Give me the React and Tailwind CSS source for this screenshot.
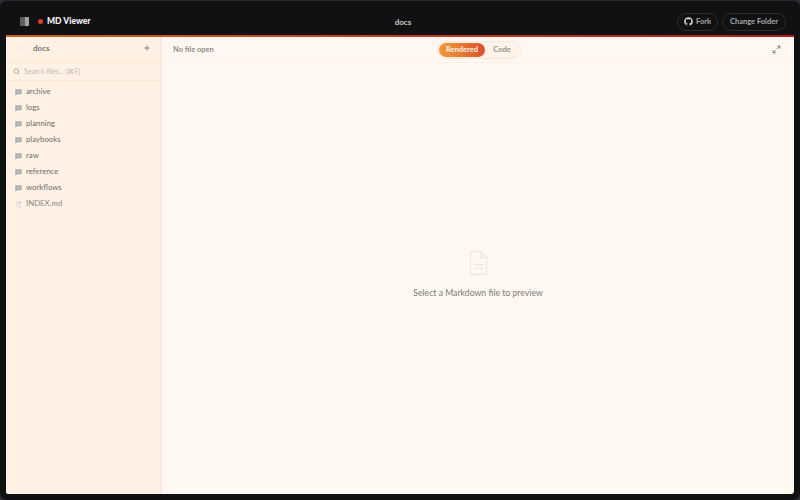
import React from "react";
import { Search, Plus, ChevronUp, Maximize2 } from "lucide-react";

const folders = ["archive", "logs", "planning", "playbooks", "raw", "reference", "workflows"];

function FolderGlyph() {
  return (
    <svg viewBox="0 0 10 10" className="h-[7px] w-[7px] shrink-0">
      <path d="M.4.4h9.2v7H3L.4 9.8z" fill="#a8adb1" />
      <path d="M2.2 2.8h5.6M2.2 5h5.6" stroke="#d2d3d0" strokeWidth="0.7" />
    </svg>
  );
}

function FileGlyph() {
  return (
    <svg viewBox="0 0 10 10" className="h-[7px] w-[7px] shrink-0">
      <path d="M1 0h5l3 3v7H1z" fill="#ebe6e4" />
      <path d="M6 0v3h3z" fill="#bdbcc2" />
    </svg>
  );
}

function GithubMark() {
  return (
    <svg viewBox="0 0 24 24" className="h-[9px] w-[9px]" fill="#d1d1d1">
      <path d="M12 .5a11.5 11.5 0 0 0-3.64 22.41c.58.1.79-.25.79-.56v-2c-3.2.7-3.88-1.54-3.88-1.54-.52-1.33-1.28-1.69-1.28-1.69-1.04-.71.08-.7.08-.7 1.16.08 1.77 1.19 1.77 1.19 1.03 1.76 2.7 1.25 3.36.96.1-.75.4-1.25.73-1.54-2.56-.29-5.25-1.28-5.25-5.69 0-1.26.45-2.28 1.19-3.09-.12-.29-.52-1.46.11-3.05 0 0 .97-.31 3.16 1.18a11 11 0 0 1 5.76 0c2.2-1.49 3.16-1.18 3.16-1.18.63 1.59.23 2.76.11 3.05.74.81 1.19 1.83 1.19 3.09 0 4.42-2.7 5.39-5.27 5.68.41.36.78 1.06.78 2.14v3.17c0 .31.21.67.8.56A11.5 11.5 0 0 0 12 .5z" />
    </svg>
  );
}

export default function App() {
  return (
    <div className="h-[500px] w-[800px] bg-[#2b2f36] font-['Lato','Noto_Sans',sans-serif] text-[#6b6663]">
      <div className="flex h-[500px] w-[800px] flex-col overflow-hidden rounded-[7px] border-t border-[#24262b] bg-[#111113]">
        <header className="flex h-[34px] shrink-0 items-center justify-between pl-[20px] pr-[14px] pt-[7px]">
          <div className="flex w-[200px] items-center">
            <div className="flex h-[9px] w-[9px] overflow-hidden rounded-[1px]">
              <span className="w-1/2 bg-[#5f5f5f]" />
              <span className="w-1/2 bg-[#a0a0a0]" />
            </div>
            <span className="ml-[9px] h-[5px] w-[5px] rounded-full bg-[#d8432c]" />
            <span className="ml-[4px] text-[8.5px] font-black text-[#f4f4f4]">MD Viewer</span>
          </div>
          <span className="text-[8px] font-bold text-[#c9c9c9]">docs</span>
          <div className="flex w-[200px] items-center justify-end gap-[4px]">
            <div className="flex h-[18px] w-[41px] items-center justify-center gap-[3px] rounded-full border border-[#2e2e30] text-[7.5px] font-bold text-[#a8a8a8]">
              <GithubMark />
              Fork
            </div>
            <div className="flex h-[18px] w-[64px] items-center justify-center rounded-full border border-[#2e2e30] text-[7.5px] font-bold text-[#a8a8a8]">
              Change Folder
            </div>
          </div>
        </header>
        <div className="mx-[6px] h-[2px] shrink-0 bg-gradient-to-r from-[#c8641f] via-[#c53a22] to-[#b01c1c]" />
        <main className="mx-[6px] mb-[6px] flex min-h-0 flex-1 overflow-hidden rounded-b-[3px] bg-[#fff8f2]">
          <aside className="flex w-[156px] shrink-0 flex-col border-r-2 border-[#fbe8db] bg-[#fff1e4]">
            <div className="flex h-[26px] items-center border-b border-[#fbe7d8] pb-[3px] pl-[11px] pr-[9px]">
              <ChevronUp className="h-[8px] w-[8px] text-[#d8d0ca]" />
              <span className="ml-[8px] flex-1 text-[8px] font-bold text-[#7d7773]">docs</span>
              <Plus className="h-[8px] w-[8px] text-[#55504d]" />
            </div>
            <div className="flex h-[18px] items-center gap-[4px] border-b border-[#fbe7d8] pl-[7px]">
              <Search className="h-[7px] w-[7px] text-[#8f8a86]" />
              <span className="text-[7px] text-[#c2bab4]">Search files... (⌘F)</span>
            </div>
            <ul className="flex flex-col pt-[3px]">
              {folders.map((f) => (
                <li key={f} className="flex h-[16px] items-center gap-[4px] pl-[9px] text-[7.8px] text-[#716c69]">
                  <FolderGlyph />
                  {f}
                </li>
              ))}
              <li className="flex h-[16px] items-center gap-[4px] pl-[9px] text-[7.8px] text-[#8a8583]">
                <FileGlyph />
                INDEX.md
              </li>
            </ul>
          </aside>
          <section className="flex min-w-0 flex-1 flex-col">
            <div className="relative flex h-[26px] shrink-0 items-center justify-between border-b border-[#fdf0e6] pl-[11px] pr-[13px]">
              <span className="text-[7.5px] font-bold text-[#8f8a86]">No file open</span>
              <div className="absolute left-[275px] top-[4px] flex h-[18px] items-center rounded-full border border-[#fbe5d8] bg-[#fff3ea] px-[1px]">
                <span className="flex h-[14px] w-[46px] items-center justify-center rounded-full bg-gradient-to-r from-[#ee9a3a] to-[#dc4f2c] text-[7.5px] font-bold text-[#fff4e6]">
                  Rendered
                </span>
                <span className="flex h-[14px] w-[34px] items-center justify-center text-[7.5px] font-bold text-[#97918d]">
                  Code
                </span>
              </div>
              <Maximize2 className="h-[9px] w-[9px] text-[#66605c]" />
            </div>
            <div className="flex flex-1 flex-col items-center justify-center pb-[7px]">
              <svg viewBox="0 0 24 24" className="h-[26px] w-[26px]" fill="none" stroke="#f0e6dd" strokeWidth="1.1" strokeLinejoin="round">
                <path d="M5 1.5h9.5L20 7v15.5H5z" />
                <path d="M14.5 1.5V7H20M8.5 9.5h2M8.5 13.5h8M8.5 17h8" />
              </svg>
              <p className="mt-[10px] text-[8.7px] text-[#7f7a76]">Select a Markdown file to preview</p>
            </div>
          </section>
        </main>
      </div>
    </div>
  );
}
